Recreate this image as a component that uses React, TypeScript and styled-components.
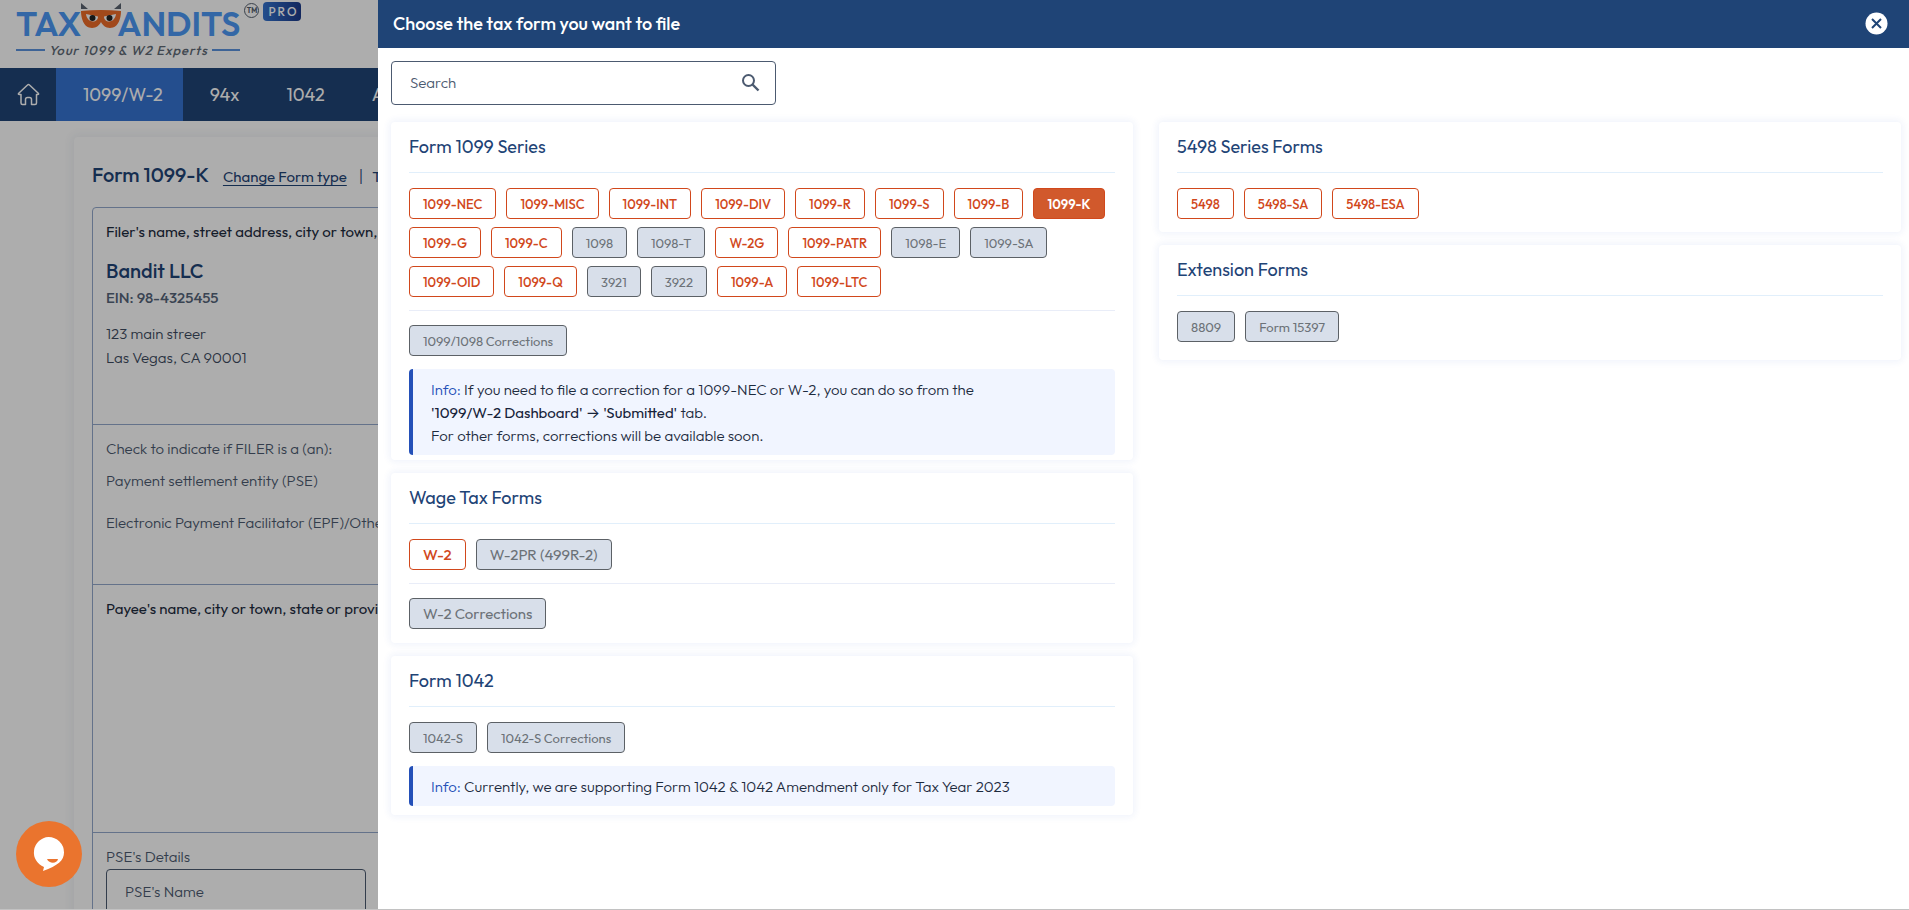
import React from "react";
import styled, { createGlobalStyle, css } from "styled-components";

const Global = createGlobalStyle`
  *, *::before, *::after { box-sizing: border-box; }
  html, body { margin: 0; height: 100%; overflow: hidden; background: #fff; }
  body { font-family: Outfit, Lato, "Open Sans", sans-serif; font-size: 15px; font-weight: 300; color: #1d2b3e; }
  button, input { font-family: inherit; font-weight: inherit; }
  h1, h2, h3, p { margin: 0; font-weight: 400; }
`;

const navy = "#1f4476";
const orange = "#d1481c";

const Shell = styled.div`
  height: 100vh;
  overflow: hidden;
  border-bottom: 1px solid #c2c2c2;
`;

/* ---------- page behind the drawer ---------- */

const Brand = styled.header`
  display: flex;
  align-items: flex-start;
  gap: 4px;
  height: 68px;
  padding: 2px 16px 0;
`;
const Logo = styled.a`
  display: flex;
  flex-direction: column;
  padding-top: 3px;
  color: #4c99f5;
  text-decoration: none;
`;
const Wordmark = styled.span`
  display: flex;
  align-items: flex-start;
  font-size: 34px;
  font-weight: 600;
  line-height: 38px;
  svg {
    flex: none;
    margin: -2px -5px 0 -1px;
  }
`;
const Trademark = styled.span`
  display: flex;
  align-items: center;
  justify-content: center;
  width: 15px;
  height: 15px;
  margin-top: 1px;
  border: 1px solid #55606e;
  border-radius: 50%;
  color: #55606e;
  font-size: 7px;
  font-weight: 700;
  line-height: 8px;
`;
const Tagline = styled.span`
  display: flex;
  align-items: center;
  gap: 4px;
  color: #606a76;
  font-size: 13px;
  font-style: italic;
  font-weight: 500;
  letter-spacing: 1px;
  line-height: 14px;
  white-space: nowrap;
  &::before, &::after {
    content: "";
    flex: 1;
    height: 2px;
    background: #5b93dd;
  }
`;
const ProBadge = styled.span`
  padding: 0 3px 0 5px;
  border-radius: 4px;
  background: linear-gradient(90deg, #3474d0, #1c3a8a);
  color: #fff;
  font-size: 12px;
  font-weight: 500;
  letter-spacing: 2px;
  line-height: 19px;
`;

const Nav = styled.nav`
  display: flex;
  height: 53px;
  background: ${navy};
`;
const NavLink = styled.a<{ $active?: boolean; $icon?: boolean }>`
  display: flex;
  align-items: center;
  padding: ${(p) => (p.$icon ? "0 16px 0 17px" : "0 20px 0 27px")};
  background: ${(p) => (p.$active ? "#3573d2" : "transparent")};
  color: #fff;
  font-size: 18px;
  font-weight: 400;
  text-decoration: none;
  white-space: nowrap;
`;

const FormCard = styled.main`
  margin: 16px 40px 0 74px;
  padding: 23px 18px;
  border-radius: 4px;
  box-shadow: 0 0 8px 3px rgba(30, 60, 120, 0.06);
`;
const FormHead = styled.div`
  display: flex;
  align-items: baseline;
  height: 47px;
  line-height: 30px;
  color: ${navy};
  white-space: nowrap;
`;
const FormTitle = styled.h1`
  margin-right: 14px;
  font-size: 20px;
  font-weight: 500;
`;
const HeadLink = styled.a`
  color: ${navy};
  font-size: 15px;
  font-weight: 400;
  text-underline-offset: 3px;
`;
const HeadText = styled.span`
  font-weight: 400;
`;
const Bar = styled.span`
  margin: 0 9px 0 12px;
  font-size: 16px;
`;
const Sheet = styled.div`
  border: 1px solid #94a9cc;
  border-radius: 4px;
  white-space: nowrap;
`;
const Block = styled.section<{ $height: number }>`
  height: ${(p) => p.$height}px;
  padding: 12px 13px;
  border-bottom: 1px solid #94a9cc;
`;
const Lead = styled.p`
  line-height: 24px;
`;
const Company = styled.h2`
  margin-top: 13px;
  color: ${navy};
  font-size: 20px;
  font-weight: 500;
  line-height: 28px;
`;
const Ein = styled.p`
  color: #56657a;
  font-weight: 500;
  line-height: 26px;
`;
const Address = styled.p`
  margin-top: 11px;
  color: #3d4b60;
  font-weight: 300;
  line-height: 24px;
`;
const Muted = styled.p<{ $gap?: number }>`
  margin-top: ${(p) => p.$gap ?? 0}px;
  color: #4c5a70;
  font-weight: 300;
  line-height: 24px;
`;
const Field = styled.label`
  display: block;
  color: #4c5a70;
  line-height: 24px;
`;
const TextInput = styled.input`
  display: block;
  width: 260px;
  height: 46px;
  padding: 0 18px 2px;
  border: 1px solid #4c5a70;
  border-radius: 4px;
  background: transparent;
  font-size: 15px;
  &::placeholder { color: #4c5a70; opacity: 1; }
`;

const Backdrop = styled.div`
  position: fixed;
  inset: 0 0 1px;
  background: rgba(0, 0, 0, 0.32);
`;

const ChatButton = styled.button`
  position: fixed;
  left: 16px;
  bottom: 23px;
  width: 66px;
  height: 66px;
  padding: 0;
  border: 0;
  border-radius: 50%;
  background: #ea742e;
`;

/* ---------- drawer ---------- */

const Drawer = styled.aside`
  position: fixed;
  inset: 0 0 1px 378px;
  overflow: hidden;
  background: #fff;
`;
const DrawerHead = styled.header`
  display: flex;
  align-items: center;
  justify-content: space-between;
  height: 48px;
  padding: 0 21px 2px 15px;
  background: ${navy};
  color: #fff;
`;
const DrawerTitle = styled.h2`
  font-size: 18px;
  font-weight: 500;
`;
const CloseButton = styled.button`
  display: flex;
  width: 23px;
  height: 23px;
  padding: 0;
  border: 0;
  background: transparent;
`;
const DrawerBody = styled.div`
  padding: 13px 8px 0 13px;
`;
const SearchBox = styled.label`
  display: flex;
  align-items: center;
  width: 385px;
  height: 44px;
  margin-bottom: 17px;
  padding: 0 15px 2px 18px;
  border: 1px solid #4c5a70;
  border-radius: 4px;
`;
const SearchInput = styled.input`
  flex: 1;
  min-width: 0;
  padding: 0;
  border: 0;
  outline: 0;
  background: transparent;
  font-size: 15px;
  &::placeholder { color: #4c5a70; opacity: 1; }
`;
const Columns = styled.div`
  display: grid;
  grid-template-columns: 1fr 1fr;
  gap: 26px;
`;
const Column = styled.div`
  display: flex;
  flex-direction: column;
  gap: 13px;
`;
const Card = styled.section<{ $bottom: number }>`
  padding: 0 18px ${(p) => p.$bottom}px;
  border-radius: 4px;
  background: #fff;
  box-shadow: 0 0 7px 2px rgba(40, 80, 200, 0.07);
`;
const CardTitle = styled.h3`
  height: 51px;
  margin-bottom: 15px;
  border-bottom: 1px solid #e1effb;
  color: ${navy};
  font-size: 18px;
  line-height: 49px;
`;
const Chips = styled.div`
  display: flex;
  flex-wrap: wrap;
  gap: 8px 10px;
`;
const Rule = styled.hr`
  height: 1px;
  margin: 13px 0 14px;
  border: 0;
  background: #e9edf8;
`;
const Chip = styled.button<{ $large?: boolean; $selected?: boolean }>`
  height: 31px;
  padding: 0 13px;
  border: 1px solid ${orange};
  border-radius: 4px;
  background: #fff;
  color: ${orange};
  font-size: ${(p) => (p.$large ? 15 : 13)}px;
  font-weight: ${(p) => (p.$selected ? 600 : 500)};
  white-space: nowrap;
  ${(p) => p.$selected && css`
    background: #d1592c;
    color: #fff;
  `}
  &:disabled {
    border-color: #5c6166;
    background: #d8dfea;
    color: #6c7278;
    font-weight: 400;
  }
`;
const Info = styled.p`
  margin-top: 13px;
  padding: 9px 18px 8px;
  border-left: 4px solid #2450b8;
  border-radius: 4px;
  background: #f1f5ff;
  color: #1d2b3e;
  font-weight: 300;
  line-height: 23px;
`;
const InfoTag = styled.span`
  color: #2450b8;
`;
const Strong = styled.span`
  color: #17233a;
  font-weight: 400;
`;
const Arrow = styled.span`
  font-family: Inter, sans-serif;
`;

type Form = { name: string; off?: boolean; on?: boolean };
const off = (name: string): Form => ({ name, off: true });
const open = (name: string): Form => ({ name });

const series1099: Form[] = [
  open("1099-NEC"), open("1099-MISC"), open("1099-INT"), open("1099-DIV"),
  open("1099-R"), open("1099-S"), open("1099-B"), { name: "1099-K", on: true },
  open("1099-G"), open("1099-C"), off("1098"), off("1098-T"), open("W-2G"),
  open("1099-PATR"), off("1098-E"), off("1099-SA"),
  open("1099-OID"), open("1099-Q"), off("3921"), off("3922"), open("1099-A"),
  open("1099-LTC"),
];

function FormChips({ forms, large }: { forms: Form[]; large?: boolean }) {
  return (
    <Chips>
      {forms.map((f) => (
        <Chip key={f.name} type="button" disabled={f.off} $selected={f.on} $large={large}>
          {f.name}
        </Chip>
      ))}
    </Chips>
  );
}

function Mask() {
  return (
    <svg width="42" height="27" viewBox="0 0 42 27" aria-hidden="true">
      <path d="M1 0l7 6H1zM41 0l-7 6h7z" fill="#5b6470" />
      <path d="M1 8Q21 6 41 8c0 8-3 15-8 16.500-6 1.500-10-1.500-12-5.500-2 4-6 7-12 5.500C4 23 1 16 1 8z" fill="#ee6c28" />
      <path d="M6 11l12 2.500c0 7-11 7-12-2.500zM36 11l-12 2.500c0 7 11 7 12-2.500z" fill="#fff" />
      <circle cx="12.500" cy="15" r="3" fill="#222" />
      <circle cx="29.500" cy="15" r="3" fill="#222" />
    </svg>
  );
}

export default function App() {
  return (
    <Shell>
      <Global />
      <Brand>
        <Logo href="#">
          <Wordmark>TAX<Mask />ANDITS</Wordmark>
          <Tagline>Your 1099 &amp; W2 Experts</Tagline>
        </Logo>
        <Trademark>TM</Trademark>
        <ProBadge>PRO</ProBadge>
      </Brand>
      <Nav>
        <NavLink href="#" $icon aria-label="Home">
          <svg width="23" height="23" viewBox="0 0 23 23" fill="none" stroke="#fff" strokeWidth="1.5" strokeLinejoin="round" strokeLinecap="round">
            <path d="M4 11.500H2.500Q.5 11.500 2 10L10.500 2q1-1 2 0L21 10q1.500 1.500-.500 1.500H19.500V20q0 1.500-1.500 1.500H14.500V16.500q0-2-2-2h-2q-2 0-2 2v5H5.500Q4 21.500 4 20z" />
          </svg>
        </NavLink>
        <NavLink href="#" $active>1099/W-2</NavLink>
        <NavLink href="#">94x</NavLink>
        <NavLink href="#">1042</NavLink>
        <NavLink href="#">ACA</NavLink>
      </Nav>
      <FormCard>
        <FormHead>
          <FormTitle>Form 1099-K</FormTitle>
          <HeadLink href="#">Change Form type</HeadLink>
          <Bar>|</Bar>
          <HeadText>Tax Year 2023</HeadText>
        </FormHead>
        <Sheet>
          <Block $height={217}>
            <Lead>Filer's name, street address, city or town, state or province</Lead>
            <Company>Bandit LLC</Company>
            <Ein>EIN: 98-4325455</Ein>
            <Address>123 main streer<br />Las Vegas, CA 90001</Address>
          </Block>
          <Block $height={160}>
            <Muted>Check to indicate if FILER is a (an):</Muted>
            <Muted $gap={8}>Payment settlement entity (PSE)</Muted>
            <Muted $gap={18}>Electronic Payment Facilitator (EPF)/Other third party</Muted>
          </Block>
          <Block $height={248}>
            <Lead>Payee's name, city or town, state or province</Lead>
          </Block>
          <Block $height={120}>
            <Field>
              PSE's Details
              <TextInput placeholder="PSE's Name" />
            </Field>
          </Block>
        </Sheet>
      </FormCard>

      <Backdrop />
      <ChatButton type="button" aria-label="Chat">
        <svg width="66" height="66" viewBox="0 0 66 66" aria-hidden="true">
          <path d="M32.500 16a15.500 15.500 0 0 1 15.500 15.500c0 8-6 13-21 18.500l1-4A15.500 15.500 0 0 1 32.500 16z" fill="#fff" />
          <path d="M31 38h11c-1 5-9 5-11 0z" fill="#ea742e" />
        </svg>
      </ChatButton>

      <Drawer aria-label="Choose a form">
        <DrawerHead>
          <DrawerTitle>Choose the tax form you want to file</DrawerTitle>
          <CloseButton type="button" aria-label="Close">
            <svg width="23" height="23" viewBox="0 0 23 23" aria-hidden="true">
              <circle cx="11.500" cy="11.500" r="11" fill="#fff" />
              <path d="M7 7l9 9M16 7l-9 9" stroke={navy} strokeWidth="2" />
            </svg>
          </CloseButton>
        </DrawerHead>
        <DrawerBody>
          <SearchBox>
            <SearchInput type="text" placeholder="Search" aria-label="Search" />
            <svg width="19" height="19" viewBox="0 0 19 19" fill="none" stroke="#4c5a70" strokeWidth="2" aria-hidden="true">
              <circle cx="7.500" cy="7.500" r="5.500" />
              <path d="M11.500 11.500l6 6" strokeWidth="2.400" />
            </svg>
          </SearchBox>
          <Columns>
            <Column>
              <Card $bottom={5}>
                <CardTitle>Form 1099 Series</CardTitle>
                <FormChips forms={series1099} />
                <Rule />
                <FormChips forms={[off("1099/1098 Corrections")]} />
                <Info>
                  <InfoTag>Info:</InfoTag> If you need to file a correction for a 1099-NEC or W-2, you can do so from the
                  <br />
                  <Strong>'1099/W-2 Dashboard' <Arrow>→</Arrow> 'Submitted'</Strong> tab.
                  <br />
                  For other forms, corrections will be available soon.
                </Info>
              </Card>
              <Card $bottom={14}>
                <CardTitle>Wage Tax Forms</CardTitle>
                <FormChips large forms={[open("W-2"), off("W-2PR (499R-2)")]} />
                <Rule />
                <FormChips large forms={[off("W-2 Corrections")]} />
              </Card>
              <Card $bottom={9}>
                <CardTitle>Form 1042</CardTitle>
                <FormChips forms={[off("1042-S"), off("1042-S Corrections")]} />
                <Info>
                  <InfoTag>Info:</InfoTag> Currently, we are supporting Form 1042 &amp; 1042 Amendment only for Tax Year 2023
                </Info>
              </Card>
            </Column>
            <Column>
              <Card $bottom={13}>
                <CardTitle>5498 Series Forms</CardTitle>
                <FormChips forms={[open("5498"), open("5498-SA"), open("5498-ESA")]} />
              </Card>
              <Card $bottom={18}>
                <CardTitle>Extension Forms</CardTitle>
                <FormChips forms={[off("8809"), off("Form 15397")]} />
              </Card>
            </Column>
          </Columns>
        </DrawerBody>
      </Drawer>
    </Shell>
  );
}
